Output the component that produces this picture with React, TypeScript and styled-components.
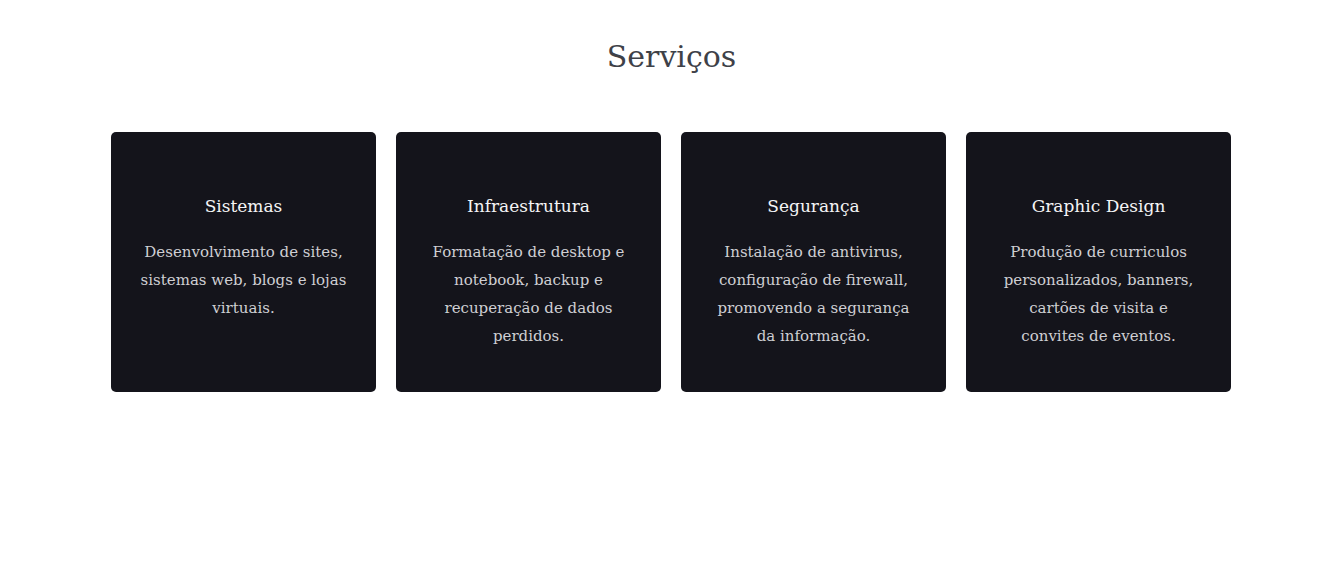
import React from "react";
import styled, { createGlobalStyle } from "styled-components";

const GlobalStyle = createGlobalStyle`
  body {
    margin: 0;
    background: #ffffff;
    font-family: "DejaVu Serif", "Liberation Serif", serif;
  }
`;

const Section = styled.section`
  padding: 36px 0 180px;
  text-align: center;
`;

const Title = styled.h2`
  margin: 0 0 54px;
  font-size: 30px;
  line-height: 42px;
  font-weight: 400;
  color: #3e4148;
`;

const Grid = styled.div`
  display: grid;
  grid-template-columns: repeat(4, 265px);
  gap: 20px;
  justify-content: center;
  padding-right: 1px;
`;

const Card = styled.article`
  background: #14141b;
  border-radius: 5px;
  padding: 63px 27px 43px;
  height: 260px;
  box-sizing: border-box;
`;

const CardTitle = styled.h3`
  margin: 0 0 20px;
  font-size: 17px;
  line-height: 23px;
  font-weight: 400;
  color: #f4f4f6;
`;

const CardText = styled.p`
  margin: 0;
  font-size: 15px;
  line-height: 28px;
  color: #cfcfd3;
`;

const services = [
  {
    title: "Sistemas",
    text: "Desenvolvimento de sites, sistemas web, blogs e lojas virtuais.",
  },
  {
    title: "Infraestrutura",
    text: "Formatação de desktop e notebook, backup e recuperação de dados perdidos.",
  },
  {
    title: "Segurança",
    text: "Instalação de antivirus, configuração de firewall, promovendo a segurança da informação.",
  },
  {
    title: "Graphic Design",
    text: "Produção de curriculos personalizados, banners, cartões de visita e convites\u00a0de eventos.",
  },
];

export default function App() {
  return (
    <>
      <GlobalStyle />
      <Section>
        <Title>Serviços</Title>
        <Grid>
          {services.map((s) => (
            <Card key={s.title}>
              <CardTitle>{s.title}</CardTitle>
              <CardText>{s.text}</CardText>
            </Card>
          ))}
        </Grid>
      </Section>
    </>
  );
}
